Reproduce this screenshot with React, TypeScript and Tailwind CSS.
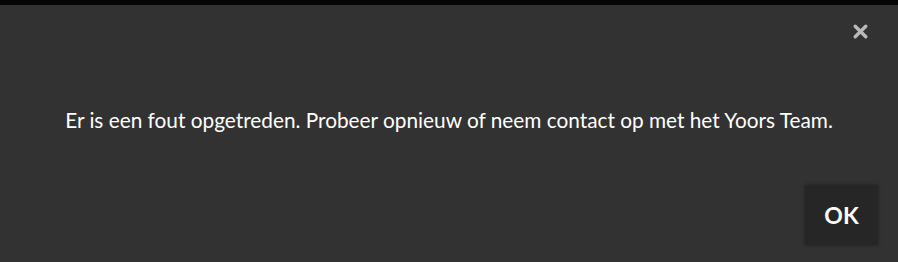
export default function App() {
  return (
    <div className="flex h-[262px] w-[898px] flex-col bg-black font-['Lato',sans-serif]">
      <div className="h-[5px] shrink-0 bg-[#050505]" />
      <div className="relative flex flex-1 flex-col bg-[#323232]">
        <button className="absolute right-[26px] top-[14px] flex h-[24px] w-[24px] items-center justify-center text-[#b9b9b9]">
          <svg width="17" height="17" viewBox="0 0 16 16">
            <path d="M3 3 L13 13 M13 3 L3 13" stroke="currentColor" strokeWidth="3.2" strokeLinecap="round" />
          </svg>
        </button>
        <p className="mt-[101px] text-center text-[20.8px] leading-[28px] text-white">
          Er is een fout opgetreden. Probeer opnieuw of neem contact op met het Yoors Team.
        </p>
        <div className="mt-auto flex justify-end pb-[17px] pr-[20px]">
          <button className="flex h-[60px] w-[73px] items-center justify-center bg-[#262626] text-[23px] font-bold text-white shadow-[0_0_4px_rgba(0,0,0,0.35)]">
            OK
          </button>
        </div>
      </div>
    </div>
  );
}
